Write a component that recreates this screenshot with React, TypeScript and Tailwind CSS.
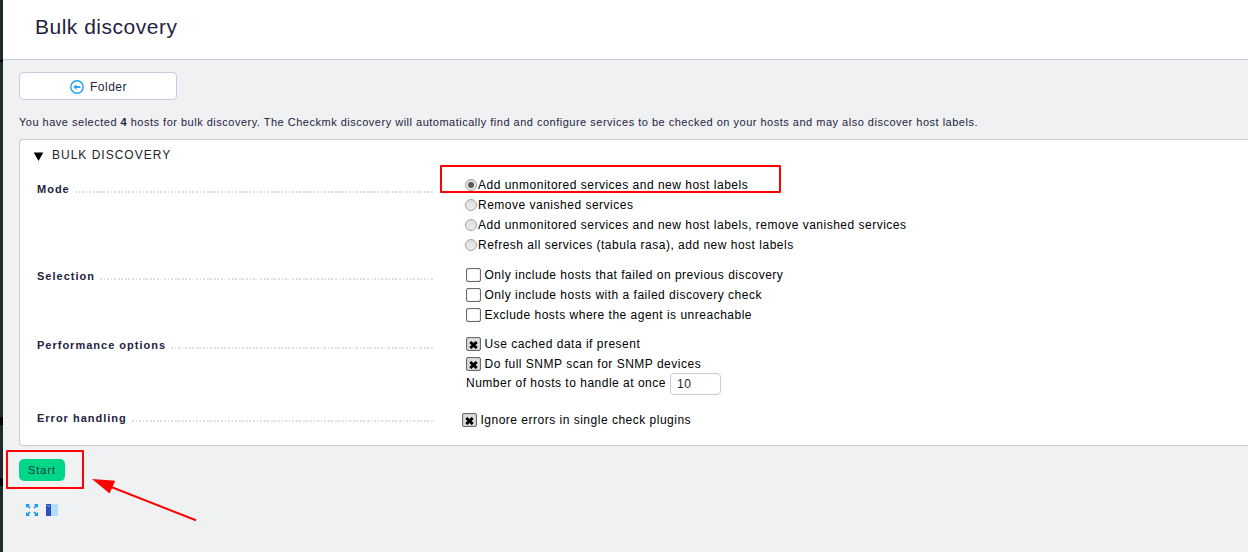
import type { ReactNode } from "react";

function Radio({ checked = false, children }: { checked?: boolean; children: ReactNode }) {
  return (
    <label className="flex h-5 items-center">
      <span className="flex size-3 shrink-0 items-center justify-center rounded-full border border-[#a3a3a3] bg-linear-to-b from-[#dedede] to-[#ececec]">
        {checked && <span className="size-1.5 rounded-full bg-[#5a5a5a]" />}
      </span>
      <span className="ml-px">{children}</span>
    </label>
  );
}

function Check({ checked = false, children }: { checked?: boolean; children: ReactNode }) {
  return (
    <label className="flex h-5 items-center">
      <span
        className={
          "flex h-3.5 w-[15px] shrink-0 items-center justify-center rounded-[2px] border border-[#6a6a6a] inset-shadow-[0_0_1px_#777] " +
          (checked ? "bg-[#dcdcdc]" : "bg-white")
        }
      >
        {checked && (
          <svg width="9" height="8" viewBox="0 0 9 8" className="mt-px -ml-px">
            <path d="M1.3 1 7.7 7M7.7 1 1.3 7" stroke="#000" strokeWidth="2.9" />
          </svg>
        )}
      </span>
      <span className="ml-[3.5px]">{children}</span>
    </label>
  );
}

function Row({ label, className, children }: { label: string; className: string; children: ReactNode }) {
  return (
    <div className={"flex items-start " + className}>
      <div className="flex h-5 w-[397px] shrink-0 items-center text-[11px] font-bold tracking-[1px] text-[#1e2440]">
        <span className="shrink-0">{label}</span>
        <span className="mt-[5px] ml-[5px] h-0.5 grow bg-[repeating-linear-gradient(90deg,#dedede_0_1.8px,transparent_1.8px_3.56px)]" />
      </div>
      {children}
    </div>
  );
}

export default function App() {
  return (
    <div className="relative flex h-[552px] w-[1248px] overflow-hidden bg-[#f0f1f3] font-['Liberation_Sans',Arial,sans-serif] tracking-[0.5px] text-black">
      <div className="flex w-[3px] shrink-0 flex-col bg-[#1f2a2b]">
        <div className="mt-[60px] h-0.5 bg-black" />
        <div className="mt-[355px] h-2 bg-[#060808]" />
        <div className="mt-[53px] h-2 bg-[#060808]" />
      </div>
      <div className="flex min-w-0 grow flex-col">
        <header className="flex h-[60px] shrink-0 items-center border-b border-[#c6cad6] bg-white pb-1.5 pl-8">
          <h1 className="text-[21px] leading-6 text-[#1e2440]">Bulk discovery</h1>
        </header>
        <main className="pl-4">
          <button className="mt-3 flex h-7 w-[158px] items-center justify-center gap-1.5 rounded-[4px] border border-[#c8cbdc] bg-white pt-px pl-px text-xs text-[#1e2440]">
            <svg width="14" height="14" viewBox="0 0 14 14" fill="none" stroke="#1e9ff2">
              <circle cx="7" cy="7" r="6.2" strokeWidth="1.4" />
              <path d="M5 7h5.4" strokeWidth="1.8" />
              <path d="M3.3 7 6.5 4.5v5z" fill="#1e9ff2" stroke="none" />
            </svg>
            Folder
          </button>
          <p className="mt-3 text-[11px] leading-5 whitespace-nowrap text-[#1e2440]">
            You have selected <b>4</b> hosts for bulk discovery. The Checkmk discovery will automatically find and
            configure services to be checked on your hosts and may also discover host labels.
          </p>
          <section className="mt-[7px] h-[307px] rounded-l-[4px] border border-r-0 border-[#c8cad2] bg-white pl-[17px] text-xs">
            <div className="flex h-[30px] items-center text-[#252525]">
              <svg width="11" height="9" viewBox="0 0 11 9" className="mt-[3px] -ml-1">
                <path d="M.7.6h9.6L5.5 8.9z" fill="#000" />
              </svg>
              <h2 className="ml-2 tracking-[1px]">BULK DISCOVERY</h2>
            </div>
            <Row label="Mode" className="mt-[5px] [&>div:first-child]:mt-1">
              <div className="pl-[31px]">
                <Radio checked>Add unmonitored services and new host labels</Radio>
                <Radio>Remove vanished services</Radio>
                <Radio>Add unmonitored services and new host labels, remove vanished services</Radio>
                <Radio>Refresh all services (tabula rasa), add new host labels</Radio>
              </div>
            </Row>
            <Row label="Selection" className="mt-2.5 [&>div:first-child]:mt-px">
              <div className="pl-8">
                <Check>Only include hosts that failed on previous discovery</Check>
                <Check>Only include hosts with a failed discovery check</Check>
                <Check>Exclude hosts where the agent is unreachable</Check>
              </div>
            </Row>
            <Row label="Performance options" className="mt-[9px] [&>div:first-child]:mt-px">
              <div className="pl-8">
                <Check checked>Use cached data if present</Check>
                <Check checked>Do full SNMP scan for SNMP devices</Check>
                <div className="-mt-px flex h-[22px] items-start">
                  <span className="leading-5">Number of hosts to handle at once</span>
                  <span className="ml-1 h-[22px] w-[51px] rounded-[4px] border border-[#c8cbdc] bg-white pl-1.5 leading-5 text-[#1e2440]">
                    10
                  </span>
                </div>
              </div>
            </Row>
            <Row label="Error handling" className="mt-[13px]">
              <div className="pt-0.5 pl-7">
                <Check checked>Ignore errors in single check plugins</Check>
              </div>
            </Row>
          </section>
          <button className="mt-[13px] flex h-[22px] w-[46px] items-center justify-center rounded-[5px] bg-[#00d68a] text-[11px] tracking-[1px] text-[#1e3a38]">
            Start
          </button>
          <div className="mt-[23px] ml-[7px] flex gap-2">
            <svg width="12" height="12" viewBox="0 0 12 12" fill="#0f97f0" stroke="#0f97f0">
              <path d="M1 1l3 3M11 1 8 4M1 11l3-3M11 11 8 8" strokeWidth="1.7" />
              <path d="M0 0h4L0 4zM12 0H8l4 4zM0 12V8l4 4zM12 12H8l4-4z" stroke="none" />
            </svg>
            <svg width="12" height="12" viewBox="0 0 12 12">
              <path d="M0 0h5v12H0z" fill="#2c50b8" />
              <path d="M5 0h7v12H5z" fill="#b0dffc" />
              <path d="M1 1h1v1H1zM3 1h1v1H3zM2 2h1v1H2z" fill="#9bb6ef" />
            </svg>
          </div>
        </main>
      </div>
      <div className="absolute top-[165px] left-[440px] h-7 w-[341px] rounded-[1px] border-2 border-[#f00]" />
      <div className="absolute top-[450px] left-1.5 h-[39px] w-[78px] rounded-[1px] border-2 border-[#f00]" />
      <svg className="absolute top-[474px] left-[88px]" width="112" height="50" viewBox="88 474 112 50">
        <path d="M110 486.5 196 520.3" stroke="#f00" strokeWidth="2" />
        <path d="M92 479l23.2 1.8-5.6 12.8z" fill="#f00" />
      </svg>
    </div>
  );
}
